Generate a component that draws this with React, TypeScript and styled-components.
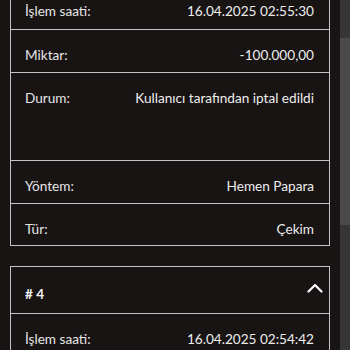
import { useLayoutEffect, useRef, useState } from 'react'
import styled, { createGlobalStyle } from 'styled-components'

const GlobalStyle = createGlobalStyle`
  html, body {
    margin: 0;
    padding: 0;
    background: #181413;
  }
  body {
    font-family: Lato, 'Open Sans', sans-serif;
    color: #ececec;
  }
`

type Field = { label: string; value: string; tall?: boolean }
type Transaction = { id: number; fields: Field[] }

const transactions: Transaction[] = [
  {
    id: 3,
    fields: [
      { label: 'İşlem saati:', value: '16.04.2025 02:55:30' },
      { label: 'Miktar:', value: '-100.000,00' },
      { label: 'Durum:', value: 'Kullanıcı tarafından iptal edildi', tall: true },
      { label: 'Yöntem:', value: 'Hemen Papara' },
      { label: 'Tür:', value: 'Çekim' },
    ],
  },
  {
    id: 4,
    fields: [
      { label: 'İşlem saati:', value: '16.04.2025 02:54:42' },
      { label: 'Miktar:', value: '-50.000,00' },
      { label: 'Durum:', value: 'Kullanıcı tarafından iptal edildi', tall: true },
      { label: 'Yöntem:', value: 'Hemen Papara' },
      { label: 'Tür:', value: 'Çekim' },
    ],
  },
]

const Scroller = styled.div`
  height: 100vh;
  overflow-y: auto;
  scrollbar-width: none;

  &::-webkit-scrollbar {
    display: none;
  }
`

// drawn scroll indicator, the native one is hidden in the capture
const Track = styled.div`
  position: fixed;
  top: 0;
  right: 0;
  width: 10px;
  height: 100vh;
  background: #363636;
`

const Thumb = styled.div`
  position: absolute;
  left: 0;
  width: 10px;
  background: #4a4a4a;
`

const List = styled.div`
  display: flex;
  flex-direction: column;
  gap: 20.5px;
  padding: 8px 20px 8px 10px;
`

const Card = styled.section`
  border: 1px solid #c2c2c2;
  background: #181413;
`

const Header = styled.div`
  display: flex;
  justify-content: space-between;
  align-items: flex-start;
  height: 46.5px;
  box-sizing: border-box;
  padding: 17.5px 6px 0 14px;
  border-bottom: 1px solid #c2c2c2;
`

const Title = styled.span`
  font-size: 13.6px;
  line-height: 18px;
  font-weight: 700;
  color: #f2f2f2;
`

const Toggle = styled.button`
  display: flex;
  background: none;
  border: none;
  padding: 0;
  margin-top: -2px;
  cursor: pointer;
`

const Row = styled.div<{ $tall?: boolean }>`
  display: flex;
  justify-content: space-between;
  align-items: flex-start;
  height: ${(p) => (p.$tall ? '87.3px' : '43.4px')};
  box-sizing: border-box;
  padding: 16px 15px 0 14px;
  font-size: 13.6px;
  line-height: 18px;

  & + & {
    border-top: 1px solid #c2c2c2;
  }
  &:last-child {
    height: 42px;
  }
`

const Label = styled.span`
  color: #e6e6e6;
`

const Value = styled.span`
  color: #ededed;
  text-align: right;
`

const ChevronUp = (
  <svg width="16" height="10" viewBox="0 0 16 10">
    <polyline
      points="1.5,8.5 8,2 14.5,8.5"
      fill="none"
      stroke="#ffffff"
      strokeWidth="2.2"
      strokeLinecap="round"
      strokeLinejoin="round"
    />
  </svg>
)

export default function App() {
  const scrollRef = useRef<HTMLDivElement>(null)
  const [thumb, setThumb] = useState({ top: 0, height: 0 })

  const measure = () => {
    const el = scrollRef.current
    if (!el) return
    const ratio = el.clientHeight / el.scrollHeight
    setThumb({ top: el.scrollTop * ratio, height: el.clientHeight * ratio })
  }

  useLayoutEffect(() => {
    if (scrollRef.current) scrollRef.current.scrollTop = 70
    measure()
  }, [])

  return (
    <>
      <GlobalStyle />
      <Scroller ref={scrollRef} onScroll={measure}>
        <List>
          {transactions.map((tx) => (
            <Card key={tx.id}>
              <Header>
                <Title># {tx.id}</Title>
                <Toggle aria-label="Daralt">{ChevronUp}</Toggle>
              </Header>
              {tx.fields.map((f) => (
                <Row key={f.label} $tall={f.tall}>
                  <Label>{f.label}</Label>
                  <Value>{f.value}</Value>
                </Row>
              ))}
            </Card>
          ))}
        </List>
      </Scroller>
      <Track>
        <Thumb style={{ top: thumb.top, height: thumb.height }} />
      </Track>
    </>
  )
}
